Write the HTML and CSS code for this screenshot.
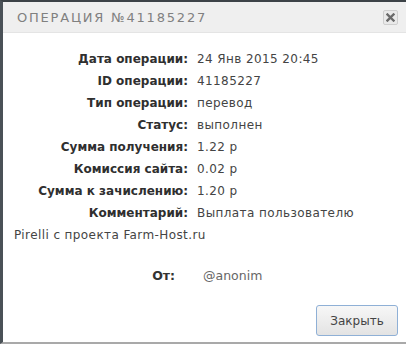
FILE: index.html
```html
<!DOCTYPE html>
<html lang="ru">
<head>
<meta charset="utf-8">
<link rel="stylesheet" href="styles.css">
</head>
<body>
<div class="dialog">
  <div class="header">
    <span class="title">ОПЕРАЦИЯ №41185227</span>
    <button class="close" aria-label="close">
      <svg width="9" height="9" viewBox="0 0 9 9"><path d="M1.5 1.5L7.5 7.5M7.5 1.5L1.5 7.5" stroke="#6a6a6a" stroke-width="2.4" stroke-linecap="square"/></svg>
    </button>
  </div>
  <div class="body">
    <div class="row"><span class="label">Дата операции:</span><span class="value">24 Янв 2015 20:45</span></div>
    <div class="row"><span class="label">ID операции:</span><span class="value">41185227</span></div>
    <div class="row"><span class="label">Тип операции:</span><span class="value">перевод</span></div>
    <div class="row"><span class="label">Статус:</span><span class="value">выполнен</span></div>
    <div class="row"><span class="label">Сумма получения:</span><span class="value">1.22 р</span></div>
    <div class="row"><span class="label">Комиссия сайта:</span><span class="value">0.02 р</span></div>
    <div class="row"><span class="label">Сумма к зачислению:</span><span class="value">1.20 р</span></div>
    <div class="row"><span class="label">Комментарий:</span><span class="value">Выплата пользователю Pirelli с проекта Farm-Host.ru</span></div>
    <div class="from"><span class="from-label">От:</span><span class="from-value">@anonim</span></div>
  </div>
  <div class="footer">
    <button class="btn">Закрыть</button>
  </div>
</div>
</body>
</html>
```
FILE: styles.css
```css
html, body { margin: 0; padding: 0; background: #fff; }
.dialog {
  width: 406px;
  height: 344px;
  box-sizing: border-box;
  border-top: 2px solid #3c4247;
  border-left: 3px solid #4a5157;
  border-bottom: 2px solid #a9a9a9;
  display: flex;
  flex-direction: column;
  background: #fff;
}
.header {
  height: 30px;
  background: #efefef;
  border-bottom: 1px solid #e4e4e4;
  display: flex;
  align-items: center;
  justify-content: space-between;
  padding: 0 8px 0 14px;
}
.title {
  font-family: "DejaVu Sans", sans-serif;
  font-size: 13px;
  letter-spacing: 1.8px;
  color: #808080;
}
.close {
  width: 15px;
  height: 15px;
  padding: 0;
  border: 1px solid #cfcfcf;
  border-radius: 2px;
  background: #e9e9e9;
  display: flex;
  align-items: center;
  justify-content: center;
}
.body {
  flex: 1;
  padding: 15px 34px 0 11px;
  font-family: "DejaVu Sans", sans-serif;
  font-size: 12px;
  color: #333;
}
.row { line-height: 22px; }
.label {
  display: inline-block;
  width: 174px;
  text-align: right;
  font-weight: bold;
  color: #2f2f2f;
  margin-right: 9px;
}
.value { color: #444; letter-spacing: 0.4px; }
.from {
  margin-top: 19px;
  line-height: 22px;
  font-family: "DejaVu Sans", sans-serif;
  font-size: 12.5px;
}
.from-label {
  display: inline-block;
  width: 161px;
  text-align: right;
  font-weight: bold;
  color: #333;
  margin-right: 28px;
}
.from-value { color: #666; }
.footer {
  display: flex;
  justify-content: flex-end;
  padding: 0 8px 6px 0;
}
.btn {
  width: 82px;
  height: 31px;
  font-family: "DejaVu Sans", sans-serif;
  font-size: 12px;
  color: #444;
  border: 1px solid #8fb0d6;
  border-radius: 3px;
  background: linear-gradient(#f7f7f7, #e3e3e3);
}
```
